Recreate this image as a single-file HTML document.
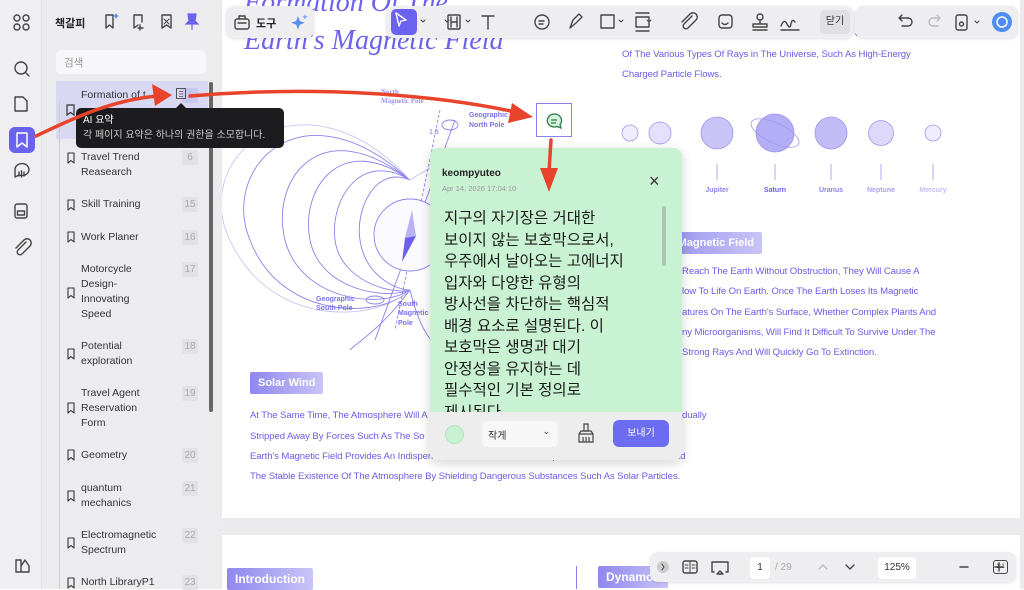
<!DOCTYPE html>
<html><head><meta charset="utf-8"><style>
*{box-sizing:border-box;margin:0;padding:0}
body{width:1024px;height:589px;overflow:hidden;position:relative;background:#fff;font-family:"Liberation Sans","Noto Sans CJK KR",sans-serif;}
.abs{position:absolute}
.rail{left:0;top:0;width:42px;height:589px;background:#efeff1;border-right:1px solid #e2e2e6}
.side{left:42px;top:0;width:178px;height:589px;background:#ececef}
.docbg{left:220px;top:0;width:804px;height:589px;background:#ebebee}
.page{left:222px;top:0;width:798px;height:518px;background:#fff}
.page2{left:222px;top:535px;width:798px;height:54px;background:#fff}
.ic{stroke:#444;fill:none;stroke-width:1.4;stroke-linecap:round;stroke-linejoin:round}
.bm{position:absolute;left:54px;width:160px;font-size:10.5px;color:#333;line-height:15px}
.bm .t{position:absolute;left:27px}
.bm .n{position:absolute;left:128px;width:16px;height:15px;background:#e2e2e5;color:#aaa;font-size:10px;text-align:center;border-radius:2px}
.bl{position:absolute;font-size:9.6px;color:#6a5ce6;white-space:nowrap;letter-spacing:-0.1px}
.tag{position:absolute;color:#fff;font-weight:bold;font-size:11px;background:linear-gradient(90deg,#8f87ee,#c9c4f7);padding:0 8px;height:22px;line-height:22px;border-radius:2px}
.tb{background:#eeeef0;border-radius:8px;box-shadow:0 1px 3px rgba(0,0,0,.12)}
</style></head><body>
<div class="abs docbg"></div>
<div class="abs page"></div>
<div class="abs page2"></div>

<!-- page content -->
<div class="abs" style="left:244px;top:-16px;font-family:'Liberation Serif',serif;font-style:italic;font-size:28px;color:#6d63ec;white-space:nowrap;line-height:38px">Formation Of The<br>Earth's Magnetic Field</div>
<div class="bl" style="left:876px;top:8px">Protec</div>
<div class="bl" style="left:855px;top:28px">ctively</div>
<div class="bl" style="left:622px;top:49px">Of The Various Types Of Rays in The Universe, Such As High-Energy</div>
<div class="bl" style="left:622px;top:69px">Charged Particle Flows.</div>

<svg class="abs" style="left:222px;top:60px" width="420" height="290" viewBox="222 60 420 290">
 <g fill="none" stroke="#8a82ea" stroke-width="0.9">
  <path d="M410 180 C300 80 220 170 250 240 C280 320 380 320 410 290"/>
  <path d="M410 180 C320 110 270 180 285 240 C300 300 380 310 410 290"/>
  <path d="M410 180 C340 130 300 190 310 240 C320 290 385 300 410 290"/>
  <path d="M410 180 C360 150 330 200 335 240 C340 280 390 295 410 290"/>
  <path d="M410 180 C375 165 355 210 360 240 C365 275 395 290 410 290"/>
  <path d="M410 180 C300 60 180 160 235 250 C280 330 380 320 410 290" stroke="#c9c5f2"/>
  <path d="M410 180 C500 120 560 180 540 240" stroke="#c9c5f2"/>
  <path d="M410 290 C380 330 360 340 350 350"/>
  <path d="M410 290 C420 330 430 340 440 350"/>
  <line x1="440" y1="110" x2="395" y2="330" stroke-dasharray="3 2"/>
  <line x1="455" y1="120" x2="375" y2="340"/>
  <ellipse cx="375" cy="300" rx="9" ry="4"/>
  <ellipse cx="450" cy="125" rx="8" ry="5"/>
 </g>
 <circle cx="410" cy="235" r="36" fill="#fafaff" stroke="#8a82ea" stroke-width="0.9"/>
 <polygon points="412,210 405,238 416,236" fill="#b9b3f5"/>
 <polygon points="405,238 416,236 402,262" fill="#6b5ff0"/>
 <text x="381" y="94" font-size="7" fill="#9a92ee" font-family="Liberation Serif" font-weight="bold">North</text>
 <text x="381" y="103" font-size="7" fill="#9a92ee" font-family="Liberation Serif" font-weight="bold">Magnetic Pole</text>
 <text x="469" y="117" font-size="7" fill="#7a70ec" font-weight="bold">Geographic</text>
 <text x="469" y="127" font-size="7" fill="#7a70ec" font-weight="bold">North Pole</text>
 <text x="429" y="134" font-size="7" fill="#7a70ec">1.5</text>
 <text x="316" y="301" font-size="7" fill="#7a70ec" font-weight="bold">Geographic</text>
 <text x="316" y="310" font-size="7" fill="#7a70ec" font-weight="bold">South Pole</text>
 <text x="398" y="306" font-size="7" fill="#7a70ec" font-weight="bold">South</text>
 <text x="398" y="315" font-size="7" fill="#7a70ec" font-weight="bold">Magnetic</text>
 <text x="398" y="325" font-size="7" fill="#7a70ec" font-weight="bold">Pole</text>
</svg>

<!-- planets -->
<svg class="abs" style="left:600px;top:100px" width="360" height="100">
 <g stroke="#9d96ee" stroke-width="0.8">
  <circle cx="30" cy="33" r="8" fill="#efeefe"/>
  <circle cx="60" cy="33" r="11" fill="#e3e1fc"/>
  <circle cx="117" cy="33" r="16" fill="#c9c5f8"/>
  <circle cx="175" cy="33" r="19" fill="#b4aef6"/>
  <ellipse cx="175" cy="33" rx="26" ry="10" fill="none" transform="rotate(25 175 33)"/>
  <circle cx="231" cy="33" r="16" fill="#c2bdf7"/>
  <circle cx="281" cy="33" r="12.5" fill="#dcd9fb"/>
  <circle cx="333" cy="33" r="8" fill="#efeefe"/>
  <line x1="117" y1="64" x2="117" y2="80"/><line x1="175" y1="64" x2="175" y2="80"/>
  <line x1="231" y1="64" x2="231" y2="80"/><line x1="281" y1="64" x2="281" y2="80"/><line x1="333" y1="64" x2="333" y2="80"/>
 </g>
 <g font-size="7" font-weight="bold" text-anchor="middle">
  <text x="117" y="92" fill="#8b83ec">Jupiter</text><text x="175" y="92" fill="#6b5ff0">Saturn</text>
  <text x="231" y="92" fill="#8b83ec">Uranus</text><text x="281" y="92" fill="#a8a2f0">Neptune</text><text x="333" y="92" fill="#c2bdf5">Mercury</text>
 </g>
</svg>

<div class="tag" style="left:640px;top:232px;width:122px;text-align:right">Magnetic Field</div>
<div class="bl" style="left:682px;top:266px">Reach The Earth Without Obstruction, They Will Cause A</div>
<div class="bl" style="left:682px;top:286px">low To Life On Earth. Once The Earth Loses Its Magnetic</div>
<div class="bl" style="left:682px;top:307px">atures On The Earth's Surface, Whether Complex Plants And</div>
<div class="bl" style="left:682px;top:327px">ny Microorganisms, Will Find It Difficult To Survive Under The</div>
<div class="bl" style="left:682px;top:347px">Strong Rays And Will Quickly Go To Extinction.</div>

<div class="tag" style="left:250px;top:372px">Solar Wind</div>
<div class="bl" style="left:250px;top:410px">At The Same Time, The Atmosphere Will A</div>
<div class="bl" style="left:682px;top:410px">dually</div>
<div class="bl" style="left:250px;top:431px">Stripped Away By Forces Such As The So</div>
<div class="bl" style="left:250px;top:451px">Earth's Magnetic Field Provides An Indispensable Guarantee For The Reproduction Of Life On Earth And</div>
<div class="bl" style="left:250px;top:471px">The Stable Existence Of The Atmosphere By Shielding Dangerous Substances Such As Solar Particles.</div>

<div class="tag" style="left:227px;top:568px;font-size:12px">Introduction</div>
<div class="abs" style="left:576px;top:566px;width:1px;height:23px;background:#8a82ea"></div>
<div class="tag" style="left:598px;top:566px;width:70px;font-size:12px">Dynamo</div>

<!-- left rail -->
<div class="abs rail"></div>
<svg class="abs" style="left:0;top:0" width="42" height="589">
 <g class="ic">
  <circle cx="17" cy="18" r="3"/><circle cx="26" cy="18" r="3"/><circle cx="17" cy="27" r="3"/><circle cx="26" cy="27" r="3"/>
  <circle cx="21" cy="68" r="6"/><line x1="25.5" y1="72.5" x2="29" y2="76"/>
  <path d="M15 97h8l4 4v10h-12z"/>
  <path d="M15 169a7 6 0 1 1 4 6l-4 2z"/><line x1="19" y1="172" x2="19" y2="176"/><line x1="21.5" y1="171" x2="21.5" y2="177"/><line x1="24" y1="172" x2="24" y2="176"/>
  <rect x="15" y="204" width="12" height="14" rx="2"/><rect x="17.5" y="211" width="7" height="4"/>
  <path d="M26 242l-8 8a2.5 2.5 0 0 0 4 4l8-8a4 4 0 0 0-6-6l-8 8"/>
  <path d="M16 560v12h5v-12zM21 566l4-6 4 6v6h-8"/>
 </g>
</svg>
<div class="abs" style="left:9px;top:127px;width:26px;height:26px;background:#6b63f0;border-radius:6px"></div>
<svg class="abs" style="left:9px;top:127px" width="26" height="26"><path d="M8 6h10v14l-5-4-5 4z" fill="none" stroke="#fff" stroke-width="1.5" stroke-linejoin="round"/></svg>

<!-- sidebar -->
<div class="abs side"></div>
<div class="abs" style="left:55px;top:15px;font-size:11px;font-weight:bold;color:#222">책갈피</div>
<svg class="abs" style="left:100px;top:10px" width="105" height="24">
 <g class="ic"><path d="M6 5h7v13l-3.5-3-3.5 3z"/><path d="M34 5h8v7M34 5v13l4-3M40 15v5M38 18h5"/><path d="M62 5h9v13l-4.5-3-4.5 3z"/><path d="M64 9l5 5M69 9l-5 5" stroke-width="1"/></g>
 <path d="M16 3l1 2 2 1-2 1-1 2-1-2-2-1 2-1z" fill="#5b8cf0"/>
 <path d="M88 4h8l-1 7 3 3h-12l3-3z M92 14v6" fill="#6b63f0" stroke="#6b63f0" stroke-width="1.2"/>
</svg>
<div class="abs" style="left:56px;top:50px;width:150px;height:24px;background:#f7f7f9;border-radius:5px;font-size:10.5px;color:#999;padding:5px 8px">검색</div>
<div class="abs" style="left:56px;top:81px;width:152px;height:58px;background:#d9d8f2"></div>
<div class="abs" style="left:209px;top:82px;width:4px;height:330px;background:#666;border-radius:2px"></div>
<div class="abs" style="left:59px;top:100px;width:1px;height:489px;background:#ccc"></div>
<div class="bm" style="top:88px"><span class="t">Formation of t</span><span class="n" style="background:#c9c6ef;color:#b7b2ee">1</span></div>
<svg class="abs" style="left:66px;top:104px" width="10" height="12"><path d="M1 1h7v10l-3.5-2.5L1 11z" fill="none" stroke="#333" stroke-width="1.2"/></svg>
<svg class="abs" style="left:175px;top:87px" width="12" height="13"><rect x="1.5" y="1.5" width="9" height="10" fill="none" stroke="#555" stroke-width="1"/><path d="M4 4.5h4M4 7h4M4 9.5h4" stroke="#555" stroke-width="0.8"/></svg>

<div class="bm" style="top:150px"><span class="t">Travel Trend<br>Reasearch</span><span class="n" style="top:0">6</span></div>
<div class="bm" style="top:197px"><span class="t">Skill Training</span><span class="n">15</span></div>
<div class="bm" style="top:230px"><span class="t">Work Planer</span><span class="n">16</span></div>
<div class="bm" style="top:262px"><span class="t">Motorcycle<br>Design-<br>Innovating<br>Speed</span><span class="n">17</span></div>
<div class="bm" style="top:339px"><span class="t">Potential<br>exploration</span><span class="n">18</span></div>
<div class="bm" style="top:386px"><span class="t">Travel Agent<br>Reservation<br>Form</span><span class="n">19</span></div>
<div class="bm" style="top:448px"><span class="t">Geometry</span><span class="n">20</span></div>
<div class="bm" style="top:481px"><span class="t">quantum<br>mechanics</span><span class="n">21</span></div>
<div class="bm" style="top:528px"><span class="t">Electromagnetic<br>Spectrum</span><span class="n">22</span></div>
<div class="bm" style="top:575px"><span class="t">North LibraryP1</span><span class="n">23</span></div>
<svg class="abs" style="left:60px;top:0" width="20" height="589"><g fill="none" stroke="#333" stroke-width="1.1" stroke-linejoin="round">
 <path d="M8 153h6v10l-3-2.5-3 2.5z"/><path d="M8 200h6v10l-3-2.5-3 2.5z"/><path d="M8 232h6v10l-3-2.5-3 2.5z"/>
 <path d="M8 288h6v10l-3-2.5-3 2.5z"/><path d="M8 349h6v10l-3-2.5-3 2.5z"/><path d="M8 403h6v10l-3-2.5-3 2.5z"/>
 <path d="M8 450h6v10l-3-2.5-3 2.5z"/><path d="M8 491h6v10l-3-2.5-3 2.5z"/><path d="M8 538h6v10l-3-2.5-3 2.5z"/><path d="M8 578h6v10l-3-2.5-3 2.5z"/></g></svg>

<!-- tooltip -->
<div class="abs" style="left:76px;top:108px;width:208px;height:40px;background:#1c1c1e;border-radius:5px;color:#fff;padding:5px 7px;font-size:10px;line-height:15px">AI 요약<br><span style="color:#ccc">각 페이지 요약은 하나의 권한을 소모합니다.</span></div>
<div class="abs" style="left:176px;top:103px;width:0;height:0;border-left:5px solid transparent;border-right:5px solid transparent;border-bottom:5px solid #1c1c1e"></div>

<!-- toolbar -->
<div class="abs tb" style="left:226px;top:6px;width:88px;height:32px"></div>
<svg class="abs" style="left:232px;top:12px" width="20" height="20"><g class="ic"><rect x="3" y="7" width="14" height="10" rx="2"/><path d="M7 7V4h6v3M6 11h8"/></g></svg>
<div class="abs" style="left:256px;top:15px;font-size:11px;font-weight:bold;color:#222">도구</div>
<svg class="abs" style="left:290px;top:12px" width="20" height="20"><path d="M8 4l1.8 5 5 1.8-5 1.8L8 17.6l-1.8-5-5-1.8 5-1.8z" fill="#5b8cf0"/><path d="M15 2l.8 2 2 .8-2 .8-.8 2-.8-2-2-.8 2-.8z" fill="#7aa5f5"/></svg>
<div class="abs tb" style="left:386px;top:6px;width:468px;height:32px"></div>
<div class="abs" style="left:391px;top:9px;width:26px;height:26px;background:#6b63f0;border-radius:5px"></div>
<svg class="abs" style="left:386px;top:6px" width="468" height="32"><g class="ic">
 <path d="M10 7l10 7-5 1-2 5z" stroke="#fff"/>
 <path d="M35 14l2 2 2-2M59 14l2 2 2-2M80 14l2 2 2-2M233 14l2 2 2-2M261 14l2 2 2-2" stroke-width="1"/>
 <rect x="62" y="9" width="12" height="14" rx="1"/><path d="M65 11v10M71 11v10M65 16h6"/>
 <path d="M96 10h12M102 10v13"/>
 <circle cx="156" cy="16" r="7"/><path d="M153 15h5M153 18h4"/>
 <path d="M184 22l3-8 6-6 3 3-6 6z"/>
 <rect x="215" y="9" width="13" height="13"/>
 <rect x="250" y="11" width="13" height="10"/><path d="M250 7h13M250 25h13"/>
 <path d="M306 10l-8 8a2.5 2.5 0 0 0 4 4l8-8a4 4 0 0 0-6-6l-8 8"/>
 <rect x="333" y="9" width="13" height="13" rx="3"/><path d="M336 17q3 3 6 0"/>
 <circle cx="374" cy="11" r="3"/><path d="M374 14v4M367 18h14v3h-14zM367 24h14"/>
 <path d="M395 20q3-8 6-2t4 0 4-2M395 24h18"/>
</g></svg>
<div class="abs" style="left:820px;top:10px;width:30px;height:24px;background:#e0e0e3;border-radius:4px;font-size:10px;color:#333;text-align:center;line-height:24px">닫기</div>
<div class="abs tb" style="left:855px;top:6px;width:163px;height:32px"></div>
<svg class="abs" style="left:855px;top:6px" width="163" height="32"><g class="ic">
 <path d="M45 12h8a4 4 0 0 1 0 8h-6M47 9l-3 3 3 3"/>
 <path d="M84 12h-6a4 4 0 0 0 0 8h5M82 9l3 3-3 3" stroke="#bbb"/>
 <rect x="101" y="9" width="11" height="15" rx="2"/><circle cx="106.5" cy="18" r="2"/>
 <path d="M120 15l2 2 2-2" stroke-width="1"/></g>
 <circle cx="147" cy="16" r="10" fill="#4f8df5"/><circle cx="147" cy="16" r="5" fill="none" stroke="#fff" stroke-width="1.5"/>
</svg>

<!-- note icon -->
<div class="abs" style="left:536px;top:103px;width:36px;height:34px;border:1.2px solid #8a82ea;background:#fff"></div>
<svg class="abs" style="left:543px;top:110px" width="22" height="22"><path d="M11 4a7 6.5 0 1 0 3 12.5l4 1.5-1-3.5A7 6.5 0 0 0 11 4z" fill="#d6f3dc" stroke="#2d7a4a" stroke-width="1.3"/><path d="M8 10h6M8 13h5" stroke="#2d7a4a" stroke-width="1.2"/></svg>

<!-- note popup -->
<div class="abs" style="left:430px;top:148px;width:252px;height:312px;border-radius:8px;overflow:hidden;box-shadow:0 3px 12px rgba(0,0,0,.18);background:#c9f2d3">
 <div style="position:absolute;left:12px;top:20px;font-size:10px;font-weight:bold;color:#222">keompyuteo</div>
 <div style="position:absolute;left:12px;top:36px;font-size:7.5px;color:#999">Apr 14, 2026 17:04:10</div>
 <div style="position:absolute;left:219px;top:24px;font-size:18px;color:#333;line-height:18px">×</div>
 <div style="position:absolute;left:14px;top:60px;width:220px;font-size:15.5px;line-height:21.5px;color:#1a1a1a;white-space:nowrap">지구의 자기장은 거대한<br>보이지 않는 보호막으로서,<br>우주에서 날아오는 고에너지<br>입자와 다양한 유형의<br>방사선을 차단하는 핵심적<br>배경 요소로 설명된다. 이<br>보호막은 생명과 대기<br>안정성을 유지하는 데<br>필수적인 기본 정의로<br>제시된다</div>
 <div style="position:absolute;left:232px;top:58px;width:4px;height:60px;background:#aac7b2;border-radius:2px"></div>
 <div style="position:absolute;left:0;top:264px;width:252px;height:48px;background:#ededee">
  <div style="position:absolute;left:15px;top:13px;width:19px;height:19px;border-radius:50%;background:#c9f2d3;border:1px solid #b5e3c0"></div>
  <div style="position:absolute;left:52px;top:9px;width:76px;height:26px;background:#f7f7f8;border-radius:5px;font-size:10px;color:#333;padding:6px 6px">작게<span style="position:absolute;right:8px;top:5px;font-size:9px">⌄</span></div>
  <svg style="position:absolute;left:147px;top:10px" width="18" height="22"><g fill="none" stroke="#444" stroke-width="1.2"><path d="M7 2h4v7H7z"/><path d="M2 12h14v8H2zM2 12l2-3h10l2 3M6 15v5M9 15v5M12 15v5"/></g></svg>
  <div style="position:absolute;left:183px;top:8px;width:56px;height:27px;background:#6c6cf2;border-radius:6px;color:#fff;font-size:10px;text-align:center;line-height:27px">보내기</div>
 </div>
</div>

<!-- bottom bar -->
<div class="abs tb" style="left:650px;top:552px;width:366px;height:30px"></div>
<svg class="abs" style="left:650px;top:552px" width="366" height="30"><g class="ic">
 <circle cx="13" cy="15" r="6" fill="#ccc" stroke="none"/><path d="M12 12l2 3-2 3" stroke-width="1"/>
 <rect x="33" y="9" width="14" height="12" rx="2"/><path d="M40 9v12M35 13h3M35 16h3M42 13h3M42 16h3" stroke-width="1"/>
 <path d="M64 20h-2v-10h16v10h-2M67 22l3-3 3 3z"/>
 <path d="M104 10v10M247 10v10" stroke="#ccc"/>
 <path d="M169 17l4-4 4 4" stroke="#bbb"/><path d="M196 13l4 4 4-4"/>
 <path d="M310 15h8M345 15h8M349 11v8"/>
</g></svg>
<div class="abs" style="left:750px;top:557px;width:20px;height:22px;background:#fff;border-radius:4px;font-size:10px;color:#333;text-align:center;line-height:22px">1</div>
<div class="abs" style="left:775px;top:562px;font-size:10px;color:#aaa">/ 29</div>
<div class="abs" style="left:878px;top:557px;width:38px;height:22px;background:#fff;border-radius:4px;font-size:10px;color:#333;text-align:center;line-height:22px">125%</div>
<div class="abs" style="left:993px;top:560px;width:15px;height:14px;border:1.2px solid #444;border-radius:3px;font-size:6px;text-align:center;line-height:12px;color:#333">1:1</div>

<!-- red arrows -->
<svg class="abs" style="left:0;top:0" width="1024" height="589">
 <g fill="none" stroke="#e8432b" stroke-width="3.5" stroke-linecap="round">
  <path d="M36 136C70 120 110 100 158 96"/>
  <path d="M190 96C320 85 440 95 520 113"/>
  <path d="M551 140L549 172"/>
 </g>
 <g fill="#e8432b">
  <polygon points="172,95 152,84 155,106"/>
  <polygon points="533,117 512,103 508,123"/>
  <polygon points="549,192 540,168 558,168"/>
 </g>
</svg>
</body></html>
